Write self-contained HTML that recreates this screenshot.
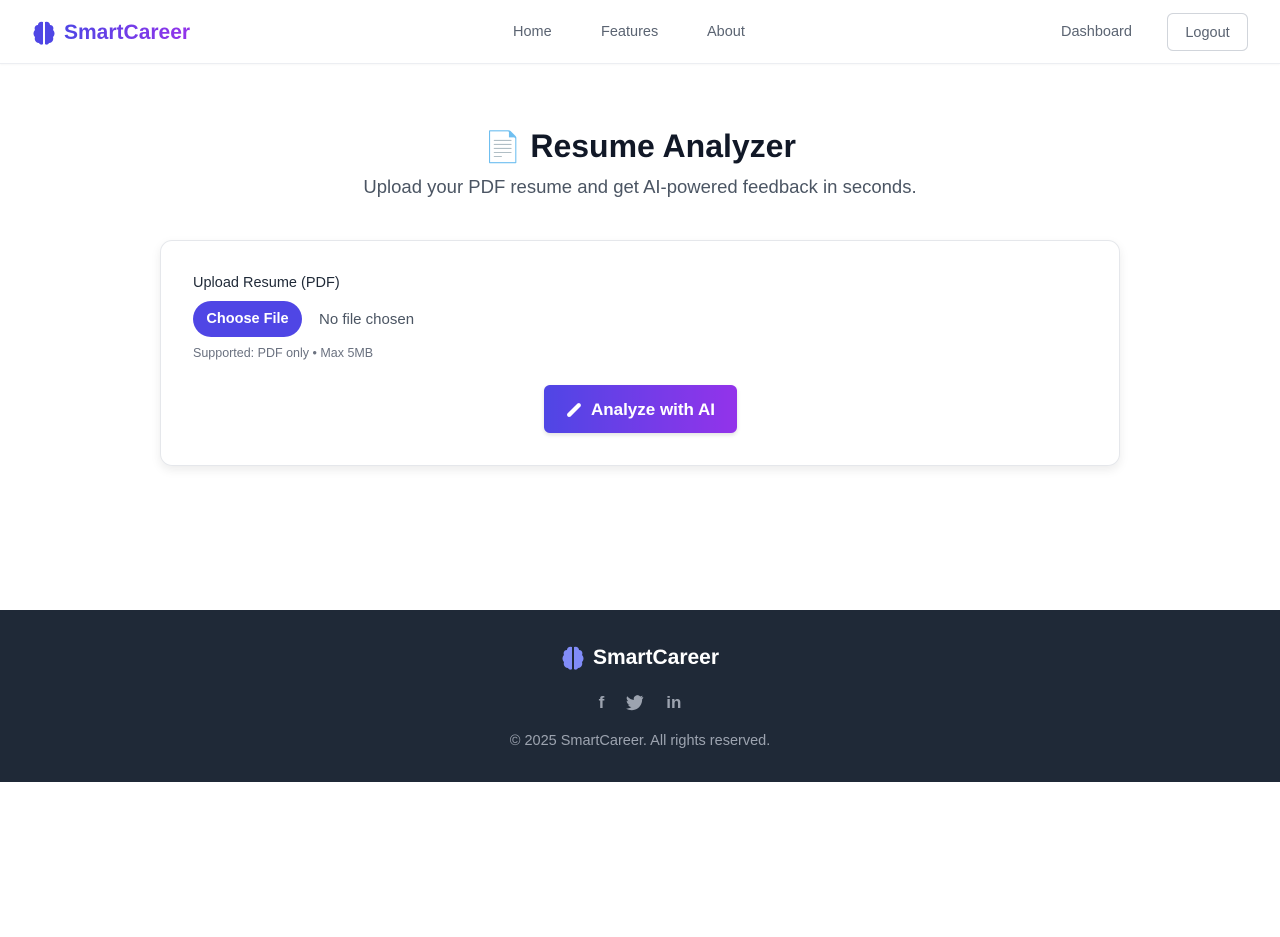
<!DOCTYPE html>
<html><head><meta charset="utf-8"><style>
*{box-sizing:border-box;margin:0;padding:0}
body{width:1280px;height:937px;background:#fff;font-family:"Liberation Sans",sans-serif;position:relative;overflow:hidden}
.nav{height:64px;border-bottom:1px solid #eceef2;box-shadow:0 1px 2px rgba(0,0,0,.03);position:relative}
.logo{position:absolute;left:32px;top:20px;display:flex;align-items:center;font-weight:bold;font-size:21px}
.logo span{background:linear-gradient(90deg,#4f46e5,#9333ea);-webkit-background-clip:text;color:transparent}
.links a{position:absolute;top:24px;font-size:14.5px;color:#5b6472;text-decoration:none}
.btn-out{position:absolute;left:1167px;top:13px;width:81px;height:38px;border:1px solid #d1d5db;border-radius:6px;font-size:14.5px;color:#5b6472;text-align:center;line-height:38px}
h1{position:absolute;top:128px;left:0;width:1280px;text-align:center;font-size:32px;color:#111827;font-weight:bold}
h1 .e{font-weight:normal;font-size:30px}
.sub{position:absolute;top:176px;width:1280px;text-align:center;font-size:18.5px;color:#4b5563}
.card{position:absolute;left:160px;top:240px;width:960px;height:226px;border:1px solid #e5e7eb;border-radius:12px;box-shadow:0 4px 10px rgba(0,0,0,.08)}
.lbl{position:absolute;left:32px;top:34px;font-size:14.5px;color:#1f2937}
.cf{position:absolute;left:32px;top:60px;width:109px;height:36px;border-radius:18px;background:#4f46e5;color:#fff;font-weight:bold;font-size:14.5px;text-align:center;line-height:37px}
.nf{position:absolute;left:158px;top:70px;font-size:15px;color:#4b5563}
.sup{position:absolute;left:32px;top:105px;font-size:12.5px;color:#6b7280}
.an{position:absolute;left:383px;top:144px;width:193px;height:48px;border-radius:6px;background:linear-gradient(90deg,#4f46e5,#9333ea);color:#fff;font-weight:bold;font-size:17px;display:flex;align-items:center;justify-content:center;gap:8px;box-shadow:0 2px 4px rgba(0,0,0,.12);padding-top:1px}
.foot{position:absolute;top:610px;left:0;width:1280px;height:172px;background:#1f2937}
.fl{position:absolute;top:35px;left:0;width:1280px;display:flex;justify-content:center;align-items:center;color:#fff;font-weight:bold;font-size:21px;gap:8px}
.soc{position:absolute;top:83px;left:0;width:1280px;display:flex;justify-content:center;gap:22px;color:#9ca3af;font-weight:bold;font-size:17px}
.copy{position:absolute;top:123px;width:1280px;text-align:center;color:#9ca3af;font-size:14.5px}
</style></head><body>
<div class="nav">
<div class="logo"><svg width="24" height="26" viewBox="0 0 24 26"><path d="M11 2C8 1 6 3 6 5 3 5 2 8 3 10 1 12 1 15 3 17 2 20 4 23 7 23 8 25 10 25 11 24ZM13 2C16 1 18 3 18 5 21 5 22 8 21 10 23 12 23 15 21 17 22 20 20 23 17 23 16 25 14 25 13 24Z" fill="#4f46e5"/></svg><span style="margin-left:8px">SmartCareer</span></div>
<div class="links"><a style="left:513px">Home</a><a style="left:601px">Features</a><a style="left:707px">About</a><a style="left:1061px">Dashboard</a></div>
<div class="btn-out">Logout</div>
</div>
<h1><span class="e">📄</span> Resume Analyzer</h1>
<div class="sub">Upload your PDF resume and get AI-powered feedback in seconds.</div>
<div class="card">
<div class="lbl">Upload Resume (PDF)</div>
<div class="cf">Choose File</div>
<div class="nf">No file chosen</div>
<div class="sup">Supported: PDF only • Max 5MB</div>
<div class="an"><svg width="17" height="17" viewBox="0 0 16 16"><path d="M3 13L12 4" stroke="#fff" stroke-width="4" stroke-linecap="round"/></svg>Analyze with AI</div>
</div>
<div class="foot">
<div class="fl"><svg width="24" height="26" viewBox="0 0 24 26"><path d="M11 2C8 1 6 3 6 5 3 5 2 8 3 10 1 12 1 15 3 17 2 20 4 23 7 23 8 25 10 25 11 24ZM13 2C16 1 18 3 18 5 21 5 22 8 21 10 23 12 23 15 21 17 22 20 20 23 17 23 16 25 14 25 13 24Z" fill="#818cf8"/></svg>SmartCareer</div>
<div class="soc"><span>f</span><svg width="18" height="16" viewBox="0 0 24 20" style="margin-top:2px"><path d="M23 2c-1 .4-2 .7-3 .8 1-.6 2-1.6 2-2.7-1 .6-2 1-3 1.2A5 5 0 0 0 10.5 6 14 14 0 0 1 1.6 1 5 5 0 0 0 3 7.6 5 5 0 0 1 .9 7v.1a5 5 0 0 0 4 4.8 5 5 0 0 1-2.2.1 5 5 0 0 0 4.6 3.4A10 10 0 0 1 0 17.4 14 14 0 0 0 7.5 19.6c9 0 14-7.5 14-14v-.6C22.5 4 23 3 23 2z" fill="#9ca3af"/></svg><span>in</span></div>
<div class="copy">© 2025 SmartCareer. All rights reserved.</div>
</div>
</body></html>
